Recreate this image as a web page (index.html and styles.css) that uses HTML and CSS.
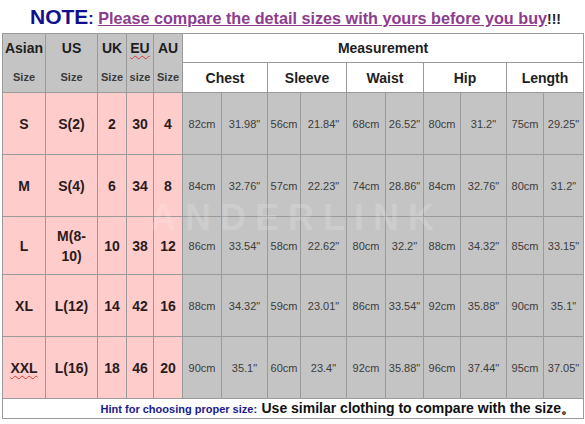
FILE: index.html
```html
<!DOCTYPE html>
<html>
<head>
<meta charset="utf-8">
<link rel="stylesheet" href="styles.css">
</head>
<body>
<div class="page">
  <div class="note"><span class="note-label">NOTE</span><span class="colon">:</span> <span class="note-text">Please compare the detail sizes with yours before you buy</span><span class="bang">!!!</span></div>
  <div class="chart-wrap">
    <table class="chart">
      <colgroup>
        <col class="w-asian"><col class="w-us"><col class="w-uk"><col class="w-eu"><col class="w-au">
        <col class="w-ccm"><col class="w-cin"><col class="w-scm"><col class="w-sin"><col class="w-wcm"><col class="w-win"><col class="w-hcm"><col class="w-hin"><col class="w-lcm"><col class="w-lin">
      </colgroup>
      <tr class="h1">
        <th class="sz" rowspan="2"><span class="t1">Asian</span><span class="t2">Size</span></th>
        <th class="sz" rowspan="2"><span class="t1">US</span><span class="t2">Size</span></th>
        <th class="sz" rowspan="2"><span class="t1">UK</span><span class="t2">Size</span></th>
        <th class="sz" rowspan="2"><span class="t1"><span class="squig">EU</span></span><span class="t2">size</span></th>
        <th class="sz" rowspan="2"><span class="t1">AU</span><span class="t2">Size</span></th>
        <th class="meas" colspan="10">Measurement</th>
      </tr>
      <tr class="h2">
        <th class="part" colspan="2">Chest</th>
        <th class="part" colspan="2">Sleeve</th>
        <th class="part" colspan="2">Waist</th>
        <th class="part" colspan="2">Hip</th>
        <th class="part" colspan="2">Length</th>
      </tr>
      <tr class="row">
        <td class="pk">S</td><td class="pk">S(2)</td><td class="pk">2</td><td class="pk">30</td><td class="pk">4</td>
        <td>82cm</td><td>31.98"</td><td>56cm</td><td>21.84"</td><td>68cm</td><td>26.52"</td><td>80cm</td><td>31.2"</td><td>75cm</td><td>29.25"</td>
      </tr>
      <tr class="row">
        <td class="pk">M</td><td class="pk">S(4)</td><td class="pk">6</td><td class="pk">34</td><td class="pk">8</td>
        <td>84cm</td><td>32.76"</td><td>57cm</td><td>22.23"</td><td>74cm</td><td>28.86"</td><td>84cm</td><td>32.76"</td><td>80cm</td><td>31.2"</td>
      </tr>
      <tr class="row short">
        <td class="pk">L</td><td class="pk">M(8-<br>10)</td><td class="pk">10</td><td class="pk">38</td><td class="pk">12</td>
        <td>86cm</td><td>33.54"</td><td>58cm</td><td>22.62"</td><td>80cm</td><td>32.2"</td><td>88cm</td><td>34.32"</td><td>85cm</td><td>33.15"</td>
      </tr>
      <tr class="row">
        <td class="pk">XL</td><td class="pk">L(12)</td><td class="pk">14</td><td class="pk">42</td><td class="pk">16</td>
        <td>88cm</td><td>34.32"</td><td>59cm</td><td>23.01"</td><td>86cm</td><td>33.54"</td><td>92cm</td><td>35.88"</td><td>90cm</td><td>35.1"</td>
      </tr>
      <tr class="row">
        <td class="pk"><span class="squig">XXL</span></td><td class="pk">L(16)</td><td class="pk">18</td><td class="pk">46</td><td class="pk">20</td>
        <td>90cm</td><td>35.1"</td><td>60cm</td><td>23.4"</td><td>92cm</td><td>35.88"</td><td>96cm</td><td>37.44"</td><td>95cm</td><td>37.05"</td>
      </tr>
      <tr class="hint">
        <td colspan="15"><span class="hint-label">Hint for choosing proper size:</span> <span class="hint-text">Use similar clothing to compare with the size。</span></td>
      </tr>
    </table>
    <div class="watermark">ANDERLINK</div>
  </div>
</div>
</body>
</html>
```

FILE: styles.css
```css
html, body {
  margin: 0;
  padding: 0;
  background: #ffffff;
}

.page {
  width: 585px;
  height: 424px;
  font-family: "Liberation Sans", Arial, sans-serif;
  color: #222;
}

.note {
  height: 33px;
  box-sizing: border-box;
  padding: 5px 0 0 30px;
  white-space: nowrap;
  font-weight: bold;
  line-height: 24px;
}

.note-label {
  font-size: 21px;
  color: #10108f;
}

.colon {
  font-size: 16px;
  color: #10108f;
}

.note-text {
  font-size: 16.2px;
  color: #8e3c8e;
  text-decoration: underline;
}

.bang {
  font-size: 14px;
  color: #222;
}

.chart-wrap {
  position: relative;
  padding-left: 2px;
}

.chart {
  border-collapse: collapse;
  table-layout: fixed;
  width: 582px;
  border: 1px solid #9a9a9a;
}

.w-asian { width: 43px; }
.w-us { width: 52px; }
.w-uk { width: 29px; }
.w-eu { width: 27px; }
.w-au { width: 29px; }
.w-ccm { width: 39px; }
.w-cin { width: 46px; }
.w-scm { width: 33px; }
.w-sin { width: 46px; }
.w-wcm { width: 39px; }
.w-win { width: 38px; }
.w-hcm { width: 37px; }
.w-hin { width: 46px; }
.w-lcm { width: 37px; }
.w-lin { width: 40px; }

.chart th,
.chart td {
  border: 1px solid #9a9a9a;
  padding: 0;
  text-align: center;
  vertical-align: middle;
  white-space: nowrap;
  overflow: hidden;
}

.h1 { height: 29px; }
.h2 { height: 30px; }

.sz {
  background: #c4c4c4;
  vertical-align: top;
}

.sz .t1 {
  display: block;
  height: 29px;
  line-height: 29px;
  font-size: 14px;
  font-weight: bold;
  color: #1e1e1e;
}

.sz .t2 {
  display: block;
  height: 29px;
  line-height: 29px;
  font-size: 11px;
  font-weight: bold;
  color: #3a3a3a;
}

.squig {
  text-decoration: underline wavy #d23a3a;
  text-decoration-thickness: 1px;
  text-underline-offset: 2px;
}

.meas {
  background: #ffffff;
  font-size: 14px;
  font-weight: bold;
  color: #1e1e1e;
}

.part {
  background: #ffffff;
  font-size: 14px;
  font-weight: bold;
  color: #1e1e1e;
}

.row { height: 62px; }
.row.short { height: 58px; }

.row td {
  background: #c4c4c4;
  font-size: 11px;
  color: #3c3c3c;
}

.row td.pk {
  background: #ffcccc;
  font-size: 14px;
  font-weight: bold;
  color: #2a1c1c;
  line-height: 20px;
  white-space: normal;
}

.hint { height: 20px; }

.hint td {
  background: #ffffff;
  text-align: right;
  padding-right: 8px;
  font-weight: bold;
  line-height: 18px;
}

.hint-label {
  font-size: 11px;
  color: #1a1a8c;
}

.hint-text {
  font-size: 14px;
  color: #111;
}

.watermark {
  position: absolute;
  left: 150px;
  top: 164px;
  font-size: 36px;
  font-weight: bold;
  letter-spacing: 9px;
  color: rgba(255, 255, 255, 0.16);
  pointer-events: none;
}
```
